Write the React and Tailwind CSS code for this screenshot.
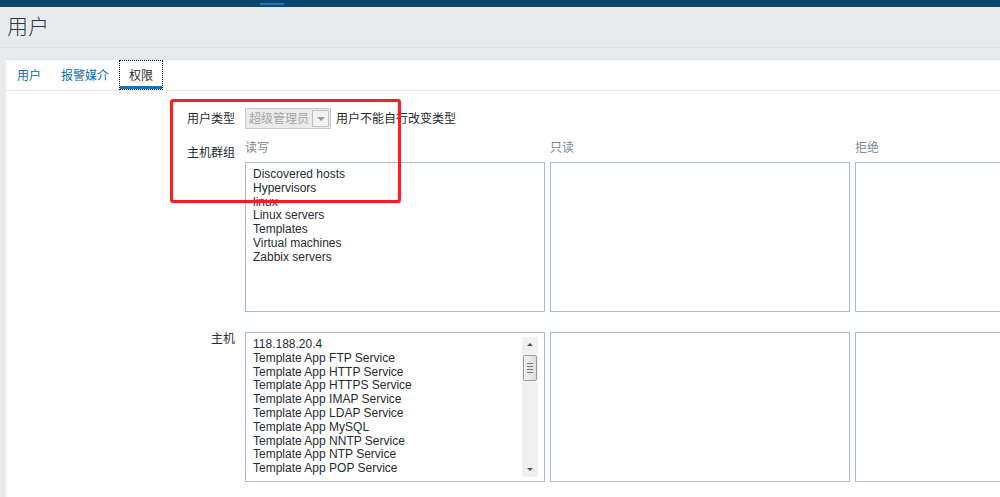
const groups = [
  "Discovered hosts",
  "Hypervisors",
  "linux",
  "Linux servers",
  "Templates",
  "Virtual machines",
  "Zabbix servers",
];

const hosts = [
  "118.188.20.4",
  "Template App FTP Service",
  "Template App HTTP Service",
  "Template App HTTPS Service",
  "Template App IMAP Service",
  "Template App LDAP Service",
  "Template App MySQL",
  "Template App NNTP Service",
  "Template App NTP Service",
  "Template App POP Service",
];

function ListBox({ items = [], scroll = false }) {
  return (
    <div className="relative h-[150px] w-[300px] shrink-0 overflow-hidden border border-[#acbbc4] bg-white">
      <div className="pl-[7px] pt-[5px] text-[12px] leading-[13.8px] text-[#1f2c33]">
        {items.map((item) => (
          <div key={item} className="whitespace-nowrap">
            {item}
          </div>
        ))}
      </div>
      {scroll && (
        <div className="absolute right-[6px] top-[4px] bottom-[4px] flex w-[16px] flex-col items-center bg-[#f0f0f0]">
          <div className="mt-[6px] h-0 w-0 border-x-[3px] border-b-[3px] border-x-transparent border-b-[#555]" />
          <div className="mt-[9px] flex h-[26px] w-[14px] flex-col items-center justify-center gap-[2px] rounded-[2px] border border-[#9a9a9a] bg-gradient-to-r from-[#f4f4f4] to-[#dcdcdc]">
            <span className="h-px w-[6px] bg-[#777]" />
            <span className="h-px w-[6px] bg-[#777]" />
            <span className="h-px w-[6px] bg-[#777]" />
            <span className="h-px w-[6px] bg-[#777]" />
          </div>
          <div className="mt-auto mb-[6px] h-0 w-0 border-x-[3px] border-t-[3px] border-x-transparent border-t-[#555]" />
        </div>
      )}
    </div>
  );
}

export default function App() {
  return (
    <div className="relative h-[497px] w-[1000px] overflow-hidden bg-[#e8ebee] font-['Liberation_Sans','Noto_Sans_CJK_SC',sans-serif] text-[12px] text-[#1f2c33]">
      {/* Top bar */}
      <div className="h-[7px] bg-[#0b466b] pl-[260px] pt-[3px]">
        <div className="h-[2px] w-[24px] bg-[#1b7cc4]" />
      </div>

      {/* Page title */}
      <div className="flex h-[41px] items-center border-b border-[#dce1e5] px-[7px] text-[21px] font-light text-[#333]">
        用户
      </div>

      {/* Form panel */}
      <div className="ml-[6px] mt-[11px] h-full overflow-hidden border-t border-[#dfe4e7] bg-white">
        <div className="flex h-[31px] border-b border-[#e6e8ea] pl-px">
          <div className="flex items-center px-[10px] pt-[2px] text-[#0a6eb4]">用户</div>
          <div className="flex items-center px-[10px] pt-[2px] text-[#0a6eb4]">报警媒介</div>
          <div className="relative flex items-center border border-dotted border-black px-[9px] pt-[1px] text-[#1f2c33]">
            权限
            <div className="absolute bottom-0 left-0 right-0 h-[3px] bg-[#0b75c0]" />
          </div>
        </div>

        <div className="flex flex-col pt-[17px]">
          {/* User type */}
          <div className="flex items-center gap-[10px]">
            <div className="w-[229px] shrink-0 text-right">用户类型</div>
            <div className="flex h-[21px] w-[86px] shrink-0 items-center justify-between border border-[#c9c9c9] bg-[#ebebeb] pl-[3px] pr-[1px] text-[#a5a5a5]">
              超级管理员
              <div className="flex h-[17px] w-[17px] items-center justify-center border border-[#c2c2c2] bg-[#f3f3f3]">
                <div className="h-0 w-0 border-x-[4px] border-t-[4px] border-x-transparent border-t-[#9a9a9a]" />
              </div>
            </div>
            <div className="-ml-[5px] whitespace-nowrap">用户不能自行改变类型</div>
          </div>

          {/* Host groups */}
          <div className="mt-[11px] flex gap-[10px]">
            <div className="w-[229px] shrink-0 pt-[4px] text-right">主机群组</div>
            <div className="flex shrink-0 gap-[5px]">
              {["读写", "只读", "拒绝"].map((title, i) => (
                <div key={title} className="flex flex-col">
                  <div className="h-[22px] leading-[16px] text-[#7b8a94]">{title}</div>
                  <ListBox items={i === 0 ? groups : []} />
                </div>
              ))}
            </div>
          </div>

          {/* Hosts */}
          <div className="mt-[20px] flex gap-[10px]">
            <div className="-mt-[2px] w-[229px] shrink-0 text-right">主机</div>
            <div className="flex shrink-0 gap-[5px]">
              <ListBox items={hosts} scroll />
              <ListBox />
              <ListBox />
            </div>
          </div>
        </div>
      </div>

      {/* Highlight frame */}
      <div className="absolute left-[170px] top-[99px] h-[104px] w-[231px] rounded-[3px] border-[3px] border-[#ff1d1d]" />
    </div>
  );
}
